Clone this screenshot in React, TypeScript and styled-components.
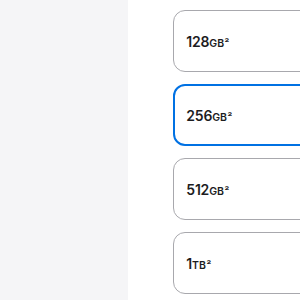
import React from "react";
import styled, { createGlobalStyle } from "styled-components";

const Global = createGlobalStyle`
  html, body { margin: 0; padding: 0; background: #ffffff; }
  body { font-family: Inter, "Liberation Sans", Arial, sans-serif; overflow: hidden; }
  * { box-sizing: border-box; }
`;

const Page = styled.div`
  display: grid;
  grid-template-columns: 128px 1fr;
  width: 300px;
  height: 300px;
  overflow: hidden;
`;

const Side = styled.div`
  background: #f5f5f7;
`;

const Main = styled.div`
  padding: 10px 0 0 45.3px;
  overflow: hidden;
`;

const List = styled.div`
  display: flex;
  flex-direction: column;
  gap: 11.6px;
  width: 300px;
`;

const Card = styled.div<{ $selected?: boolean }>`
  height: 62.3px;
  border-radius: 12px;
  border: ${(p) => (p.$selected ? "2px solid #0071e3" : "1px solid #a8a8ad")};
  padding-left: ${(p) => (p.$selected ? "11px" : "12px")};
  display: flex;
  align-items: center;
  color: #1d1d1f;
  background: #fff;
`;

const Label = styled.span`
  font-weight: 600;
  white-space: nowrap;
`;

const Amount = styled.span`
  font-size: 14px;
  letter-spacing: -0.2px;
`;

const Unit = styled.span`
  font-size: 10.5px;
`;

const Note = styled.span`
  font-size: 10.5px;
  margin-left: 0.5px;
`;

const options = [
  { amount: "128", unit: "GB" },
  { amount: "256", unit: "GB", selected: true },
  { amount: "512", unit: "GB" },
  { amount: "1", unit: "TB" },
];

export default function App() {
  return (
    <>
      <Global />
      <Page>
        <Side />
        <Main>
          <List>
            {options.map((o) => (
              <Card key={o.amount} $selected={o.selected}>
                <Label>
                  <Amount>{o.amount}</Amount>
                  <Unit>{o.unit}</Unit>
                  <Note>²</Note>
                </Label>
              </Card>
            ))}
          </List>
        </Main>
      </Page>
    </>
  );
}
